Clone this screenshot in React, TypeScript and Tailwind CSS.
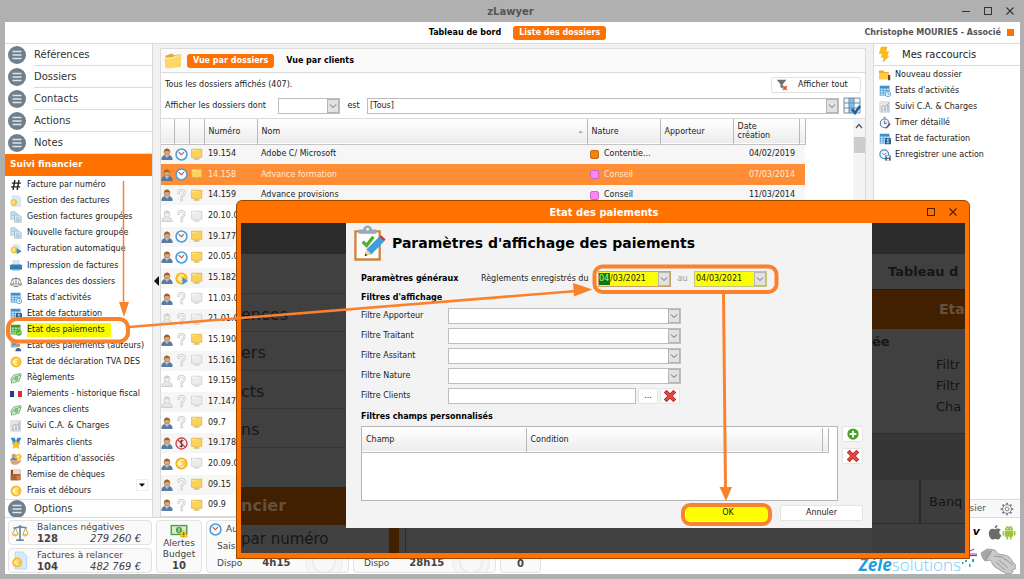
import type { ReactNode } from "react";

/* ---------- icons ---------- */

type IconName =
  | "hash" | "euroDoc" | "copy" | "auto" | "printer" | "balance" | "activity" | "billing"
  | "payment" | "authors" | "coin" | "cash" | "flag" | "chart" | "medal" | "partners"
  | "cheque" | "newFolder" | "timer" | "action";

function Euro({ x, y, r }: { x: number; y: number; r: number }) {
  return (
    <g>
      <circle cx={x} cy={y} r={r} fill="#f4b21b" />
      <circle cx={x} cy={y} r={r * 0.78} fill="#fbc93d" />
      <path
        d={`M${x + r * 0.4} ${y - r * 0.4}a${r * 0.52} ${r * 0.52} 0 1 0 0 ${r * 0.8}M${x - r * 0.65} ${y - r * 0.12}h${r * 0.8}M${x - r * 0.65} ${y + r * 0.15}h${r * 0.8}`}
        fill="none"
        stroke="#fff3c4"
        strokeWidth={r * 0.2}
      />
    </g>
  );
}

function Sheet({ green }: { green?: boolean }) {
  const main = green ? "#3f9a2e" : "#3f8fca";
  const cell = green ? "#a9dd8c" : "#bfe0f5";
  return (
    <g>
      <rect x="1" y="1" width="13" height="13" fill={main} />
      {[0, 1, 2].map((r) =>
        [0, 1, 2].map((c) => (
          <rect key={`${r}${c}`} x={2 + c * 4} y={4.6 + r * 3.1} width="3.2" height="2.4" fill={cell} />
        )),
      )}
    </g>
  );
}

function Icon({ name }: { name: IconName }) {
  return (
    <svg viewBox="0 0 16 16" className="size-3 shrink-0" aria-hidden="true">
      {name === "hash" && (
        <path d="M6.5 1.5 4 14.5M12 1.5 9.5 14.5M2.5 5.5h12M1.5 10.5h12" stroke="#222" strokeWidth="1.9" fill="none" />
      )}
      {name === "euroDoc" && (
        <g>
          <path d="M3 1h8l3 3v11H3z" fill="#d7ebf8" stroke="#b4d3e8" strokeWidth=".6" />
          <Euro x={5} y={10} r={4.2} />
        </g>
      )}
      {name === "copy" && (
        <g fill="#d4e3ee" stroke="#8fb1c8" strokeWidth=".9">
          <path d="M1 1h6l2 2v8H1z" />
          <path d="M6 5h6l3 3v7H6z" />
          <path d="M8 9h4M8 11h5M8 13h5M3 4h3M3 6h2" />
        </g>
      )}
      {name === "auto" && (
        <g>
          <path d="M4 1h7l3 3v9H4z" fill="#d7ebf8" />
          <Euro x={5.5} y={9} r={4.5} />
          <path d="m9 7 6.5 4L9 15z" fill="#2690d2" />
        </g>
      )}
      {name === "printer" && (
        <g>
          <path d="M4 1h8v6H4z" fill="#d9ebf7" stroke="#8cb8d6" strokeWidth=".6" />
          <rect y="6" width="16" height="7" rx="1.5" fill="#2f80b9" />
          <path d="M3 10h10v4H3z" fill="#5fb2e0" />
          <path d="M3 10h10v1.4H3z" fill="#174f7b" />
        </g>
      )}
      {name === "balance" && (
        <g fill="none" stroke="#8f8660" strokeWidth="1">
          <path d="M8 1.5V13M5 14h6M2.5 4.5 8 3l5.5 1.5" stroke="#7088a0" strokeWidth="1.4" />
          <path d="m3 4.5-2.5 6M3 4.5l2.5 6M13 4.5l-2.5 6M13 4.5l2.5 6" />
          <path d="M.5 10.5h5a2.5 2 0 0 1-5 0zM10.5 10.5h5a2.5 2 0 0 1-5 0z" fill="#dcc883" />
        </g>
      )}
      {name === "activity" && (
        <g>
          <Sheet />
          <circle cx="12" cy="12" r="3.6" fill="#e8f5fd" stroke="#4b9ad2" />
          <path d="M12 10v2.2h1.6" fill="none" stroke="#35678c" strokeWidth=".8" />
        </g>
      )}
      {name === "billing" && (
        <g>
          <Sheet />
          <path d="M8 7h8v8H8z" fill="#245f8e" />
          <path d="M13.5 9h-3l2 2-2 2h3" fill="none" stroke="#fff" />
        </g>
      )}
      {name === "payment" && (
        <g>
          <Sheet green />
          <circle cx="11.8" cy="11.8" r="3.8" fill="#55b42f" />
          <path d="m10 12 1.4 1.4 2.4-3" fill="none" stroke="#fff" />
        </g>
      )}
      {name === "authors" && (
        <g>
          <path d="M1 2h9v8H1z" fill="#9dbbd2" />
          <path d="M3 4h5M3 6h5M3 8h3" stroke="#5c7c95" />
          <circle cx="11" cy="7" r="2.4" fill="#c98c54" />
          <path d="M7 15c0-6 8-6 8 0z" fill="#3f5f85" />
        </g>
      )}
      {name === "coin" && <Euro x={8} y={8} r={7.2} />}
      {name === "cash" && (
        <g fill="#cfe8cd" stroke="#5fa45f" strokeWidth="1">
          <path d="M1 9 5 4l9-2-2 7-10 3z" />
          <path d="m2 12 4-5 9-3-3 8-10 3z" />
          <circle cx="8.5" cy="9" r="2" fill="#8bc58a" />
        </g>
      )}
      {name === "flag" && (
        <g>
          <path d="M0 4h5.3v8H0z" fill="#24398f" />
          <path d="M5.3 4h5.4v8H5.3z" fill="#f5f5f5" />
          <path d="M10.7 4H16v8h-5.3z" fill="#dc2c3a" />
        </g>
      )}
      {name === "chart" && (
        <g>
          <path d="M1 1h13v14H1z" fill="#e7e7e7" stroke="#c2c2c2" strokeWidth=".7" />
          <path d="M3 10h2v4H3zM7 8h2v6H7zM11 5h2v9h-2z" fill="#a9bccb" />
          <path d="m2 9 4-3 3 1 5-5" fill="none" stroke="#cf8a75" />
        </g>
      )}
      {name === "medal" && (
        <g>
          <path d="M1 1h5l3 6-4 3zM15 1h-5L7 7l4 3z" fill="#2d8bd0" />
          <path d="m8 4 1.900 3.700 4.100.5-3 2.900.8 4.100L8 13.300l-3.800 1.900.8-4.100-3-2.900 4.100-.5z" fill="#ffc021" stroke="#dd981a" strokeWidth=".5" />
        </g>
      )}
      {name === "partners" && (
        <g>
          <circle cx="5" cy="4" r="3" fill="#d19a66" />
          <path d="M0 10c0-5 10-5 10 0z" fill="#4d8bbd" />
          <Euro x={11.5} y={5} r={3.8} />
          <path d="M1 10c5-1 6 2 14-1-1 7-11 9-14 4z" fill="#e0a36d" />
        </g>
      )}
      {name === "cheque" && (
        <g>
          <path d="M1 1h13v14H1z" fill="#8a4a26" />
          <path d="M4 1h10v6H4z" fill="#e9dccb" />
          <path d="M1 7h10v8H1z" fill="#a9643a" />
          <circle cx="11.500" cy="11.500" r="3" fill="#d9803f" />
        </g>
      )}
      {name === "newFolder" && (
        <g>
          <path d="M0 2h6l1 2h6v9H0z" fill="#e6aa28" />
          <path d="M0 5h13v9H0z" fill="#ffc94a" />
          <path d="M12 8h3v7h-3z" fill="#5b4a36" />
        </g>
      )}
      {name === "timer" && (
        <g>
          <circle cx="7.500" cy="8.500" r="5.800" fill="#eef6fc" stroke="#6381a0" strokeWidth="1.500" />
          <path d="M6 1h3M7.500 5v4l3-1" fill="none" stroke="#44607c" strokeWidth="1.200" />
          <path d="m9 14 5-6 1.500 1.500-5 5.500-2 .5z" fill="#7b3e68" />
        </g>
      )}
      {name === "action" && (
        <g>
          <circle cx="7" cy="7" r="5.800" fill="#eaf5fd" stroke="#3b8fce" strokeWidth="1.600" />
          <path d="m4 5 3 3 3-3" fill="none" stroke="#d4574a" strokeWidth="1.200" />
          <path d="M8.500 8.500H15.500v7h-7z" fill="#3e4e62" />
          <path d="M10 8.500h4v3h-4zM10.500 13h3v2.500h-3z" fill="#eef2f5" />
        </g>
      )}
    </svg>
  );
}

function Person({ on }: { on: boolean }) {
  return (
    <svg viewBox="0 0 16 16" className="size-3" aria-hidden="true">
      <path d="M1 15.500c0-5 3-6 7-6s7 1 7 6z" fill={on ? "#4f7da9" : "#e4e4e4"} stroke={on ? "#3f678f" : "#bcbcbc"} strokeWidth=".8" />
      <path d="m5.500 9.500 2.500 4 2.500-4z" fill="#fff" />
      <path d="m7.300 10.500.7 5 .9-5z" fill={on ? "#cb4a34" : "#d0d0d0"} />
      <circle cx="8" cy="5.500" r="3.900" fill={on ? "#dba878" : "#efefef"} stroke={on ? "#a8703c" : "#bcbcbc"} strokeWidth=".8" />
      <path d="M4 5c0-6 8-6 8 0-2-1.500-5-1.500-8 0z" fill={on ? "#a4622b" : "#cfcfcf"} />
    </svg>
  );
}

function Clock() {
  return (
    <svg viewBox="0 0 16 16" className="size-[13px]" aria-hidden="true">
      <circle cx="8" cy="8" r="6.700" fill="#f4fafe" stroke="#4c9cd8" strokeWidth="1.900" />
      <path d="m4.500 5.200 3.500 3 3-3.200" fill="none" stroke="#d2554c" strokeWidth="1.300" />
    </svg>
  );
}

type Status = "clock" | "ask" | "play" | "coin" | "none";

function StatusIcon({ status }: { status: Status }) {
  if (status === "clock") return <Clock />;
  return (
    <svg viewBox="0 0 16 16" className="size-[13px]" aria-hidden="true">
      {status === "ask" && (
        <g fill="none" strokeLinecap="round">
          <path d="M4.500 5c0-4.500 7-4.500 7 0 0 2.500-3.300 2.500-3.300 5M8.200 13.500v.2" stroke="#c4c4c4" strokeWidth="3.200" />
          <path d="M4.500 5c0-4.500 7-4.500 7 0 0 2.500-3.300 2.500-3.300 5M8.200 13.500v.2" stroke="#f6f6f6" strokeWidth="1.500" />
        </g>
      )}
      {(status === "play" || status === "coin") && <Euro x={8} y={8} r={7.500} />}
      {status === "play" && <path d="m9 6.500 7 4.500-7 4.500z" fill="#3b9bd6" />}
      {status === "none" && (
        <g fill="none">
          <circle cx="8" cy="8" r="6.800" fill="#fbeeee" stroke="#cb3c3c" strokeWidth="1.600" />
          <path d="M10.500 5C7 3 5 7 8 8s2 5-2.500 3M8 3v10" stroke="#444" strokeWidth="1.300" />
          <path d="m3.200 3.200 9.600 9.600" stroke="#cb3c3c" strokeWidth="1.600" />
        </g>
      )}
    </svg>
  );
}

function FolderMark({ on }: { on: boolean }) {
  return (
    <svg viewBox="0 0 16 16" className="size-[13px]" aria-hidden="true">
      <path d="M2 1.500h12.500v10h-5l-1.500 3-1-3H2z" fill={on ? "#fbd35c" : "#ececec"} stroke={on ? "#dcae3a" : "#c9c9c9"} strokeWidth=".9" />
      <path d="M2.500 2h5l-1 2h-4z" fill={on ? "#fde596" : "#fafafa"} />
      <path d="M4 13.500h8" stroke={on ? "#c3a14b" : "#c9c9c9"} />
    </svg>
  );
}

function Cross() {
  return (
    <svg viewBox="0 0 16 16" className="size-3.5" aria-hidden="true">
      <path d="m2.500 2.500 11 11M13.500 2.500l-11 11" stroke="#b52c25" strokeWidth="4.600" />
      <path d="m3 3 10 10M13 3 3 13" stroke="#e04a3f" strokeWidth="3" />
    </svg>
  );
}

/* ---------- data ---------- */

const sections = ["Références", "Dossiers", "Contacts", "Actions", "Notes"];

const financeLinks: [string, IconName][] = [
  ["Facture par numéro", "hash"],
  ["Gestion des factures", "euroDoc"],
  ["Gestion factures groupées", "copy"],
  ["Nouvelle facture groupée", "copy"],
  ["Facturation automatique", "auto"],
  ["Impression de factures", "printer"],
  ["Balances des dossiers", "balance"],
  ["Etats d'activités", "activity"],
  ["Etat de facturation", "billing"],
  ["Etat des paiements", "payment"],
  ["Etat des paiements (auteurs)", "authors"],
  ["Etat de déclaration TVA DES", "coin"],
  ["Règlements", "cash"],
  ["Paiements - historique fiscal", "flag"],
  ["Avances clients", "cash"],
  ["Suivi C.A. & Charges", "chart"],
  ["Palmarès clients", "medal"],
  ["Répartition d'associés", "partners"],
  ["Remise de chèques", "cheque"],
  ["Frais et débours", "coin"],
];

const shortcuts: [string, IconName][] = [
  ["Nouveau dossier", "newFolder"],
  ["Etats d'activités", "activity"],
  ["Suivi C.A. & Charges", "chart"],
  ["Timer détaillé", "timer"],
  ["Etat de facturation", "billing"],
  ["Enregistrer une action", "action"],
];

interface Row {
  num: string;
  person: boolean;
  status: Status;
  folder: boolean;
  name?: string;
  nature?: string;
  color?: "orange" | "pink";
  date?: string;
}

const rows: Row[] = [
  { num: "19.154", person: true, status: "clock", folder: true, name: "Adobe C/ Microsoft", nature: "Contentie...", color: "orange", date: "04/02/2019" },
  { num: "14.158", person: true, status: "clock", folder: true, name: "Advance formation", nature: "Conseil", color: "pink", date: "07/03/2014" },
  { num: "14.159", person: true, status: "ask", folder: true, name: "Advance provisions", nature: "Conseil", color: "pink", date: "11/03/2014" },
  { num: "20.10.0", person: false, status: "ask", folder: false },
  { num: "19.177", person: true, status: "clock", folder: true },
  { num: "20.05.0", person: true, status: "clock", folder: true },
  { num: "15.182", person: true, status: "play", folder: true },
  { num: "11.03.0", person: true, status: "ask", folder: false },
  { num: "21.01.0", person: false, status: "ask", folder: false },
  { num: "15.190", person: true, status: "ask", folder: true },
  { num: "15.161", person: true, status: "ask", folder: false },
  { num: "19.159", person: false, status: "ask", folder: false },
  { num: "17.147", person: false, status: "ask", folder: false },
  { num: "09.7", person: true, status: "ask", folder: true },
  { num: "19.178", person: true, status: "none", folder: true },
  { num: "20.09.0", person: true, status: "coin", folder: false },
  { num: "09.15", person: true, status: "ask", folder: true },
  { num: "09.9", person: true, status: "ask", folder: true },
];

/* ---------- building blocks ---------- */

function Arrow() {
  return (
    <span className="pointer-events-none flex w-3 shrink-0 items-center justify-center border border-[#b5b5b5] bg-[#e2e2e2]">
      <svg viewBox="0 0 8 8" className="size-2" aria-hidden="true">
        <path d="m1 2.500 3 3 3-3" fill="none" stroke="#666" />
      </svg>
    </span>
  );
}

function Combo({ label, value = "", className }: { label: string; value?: string; className: string }) {
  return (
    <span className={`flex border border-[#bdbdbd] bg-white ${className}`}>
      <select aria-label={label} className="min-w-0 flex-1 appearance-none bg-transparent px-0.5 outline-none">
        <option>{value}</option>
      </select>
      <Arrow />
    </span>
  );
}

function MenuDisc() {
  return (
    <span className="flex size-[18px] shrink-0 items-center justify-center rounded-full bg-[#6f7f8c]">
      <svg viewBox="0 0 10 10" className="size-2.5" aria-hidden="true">
        <path d="M.5 1.500h9M.5 5h9M.5 8.500h9" stroke="#dfe5ea" strokeWidth="1.300" />
      </svg>
    </span>
  );
}

function SectionButton({ children }: { children: ReactNode }) {
  return (
    <button className="flex h-[22px] w-full shrink-0 items-center gap-2 pl-[3px] text-left text-[10px] text-[#333]">
      <MenuDisc />
      <span className="flex h-full flex-1 items-center border-b border-[#dcdcdc]">{children}</span>
    </button>
  );
}

function Sidebar() {
  return (
    <nav className="flex w-[147px] shrink-0 flex-col bg-white">
      {sections.map((s) => (
        <SectionButton key={s}>{s}</SectionButton>
      ))}
      <button className="h-[22px] shrink-0 bg-[#ff7200] pl-[5px] text-left text-[9px] font-bold text-white">
        Suivi financier
      </button>
      <div className="relative flex min-h-0 flex-1 flex-col pt-px">
        {financeLinks.map(([label, icon]) => (
          <a key={label} href="#" className="flex min-h-0 flex-1 items-center gap-[5px] whitespace-nowrap pl-[5px] text-[#222]">
            <Icon name={icon} />
            <span className={label === "Etat des paiements" ? "bg-[#f7fb00] pr-1.5 leading-[14px]" : "leading-3"}>{label}</span>
          </a>
        ))}
        <button aria-label="Défiler" className="absolute right-1 bottom-2 flex size-3 items-center justify-center border border-[#eee] bg-white">
          <svg viewBox="0 0 8 8" className="size-2" aria-hidden="true">
            <path d="M1 2.500h6L4 5.800z" fill="#000" />
          </svg>
        </button>
      </div>
      <button className="flex h-[18px] w-full shrink-0 items-center gap-2 border-t border-[#dcdcdc] pl-[3px] text-left text-[10px] text-[#333]">
        <MenuDisc />
        Options
      </button>
    </nav>
  );
}

const headCell = "border-r border-[#b8b8b8] px-1 py-0 text-left font-normal";

function DossierTable() {
  return (
    <table className="w-[644px] table-fixed border-collapse text-[#222]">
      <colgroup>
        <col className="w-[13px]" />
        <col className="w-[15px]" />
        <col className="w-[15px]" />
        <col className="w-[53px]" />
        <col className="w-[330px]" />
        <col className="w-[73px]" />
        <col className="w-[73px]" />
        <col className="w-[66px]" />
        <col className="w-[6px]" />
      </colgroup>
      <thead>
        <tr className="h-[25px] border-b border-[#c4c4c4] bg-linear-to-b from-white to-[#ececec] leading-[9px]">
          <th className="border-r border-[#b8b8b8]" />
          <th className="border-r border-[#b8b8b8]" />
          <th className="border-r border-[#b8b8b8]" />
          <th className={headCell}>Numéro</th>
          <th className={headCell}>
            <span className="flex items-center justify-between">
              Nom
              <svg viewBox="0 0 6 4" className="h-[3px] w-[5px]" aria-hidden="true">
                <path d="m0 4 3-3.500L6 4z" fill="#aaa" />
              </svg>
            </span>
          </th>
          <th className={headCell}>Nature</th>
          <th className={headCell}>Apporteur</th>
          <th className={headCell}>
            Date
            <br />
            création
          </th>
          <th className="border-r border-[#b8b8b8]" />
        </tr>
      </thead>
      <tbody>
        {rows.map((r) => (
          <tr
            key={r.num}
            className={
              r.num === "14.158"
                ? "h-[21px] bg-[#ff8d35] text-[#ffe9d6]"
                : "odd:h-5 odd:bg-[#f6f6f6] even:h-[21px] even:bg-white"
            }
          >
            <td className="p-0"><Person on={r.person} /></td>
            <td className="p-0 pl-px"><StatusIcon status={r.status} /></td>
            <td className="p-0 pl-px"><FolderMark on={r.folder} /></td>
            <td className="py-0 pr-0 pl-1 whitespace-nowrap">{r.num}</td>
            <td className="py-0 pr-0 pl-1">{r.name}</td>
            <td className="py-0 pr-0 pl-[3px]">
              {r.nature && (
                <span className="flex items-center gap-[5px] whitespace-nowrap">
                  <span className={r.color === "orange" ? "size-[9px] rounded-xs border border-[#c26a14] bg-[#f5820d]" : "size-[9px] rounded-xs border border-[#c46cc9] bg-[#ff84f6]"} />
                  {r.nature}
                </span>
              )}
            </td>
            <td />
            <td className="p-0 text-right" colSpan={2}>
              <span className="pr-2.5">{r.date}</span>
            </td>
          </tr>
        ))}
      </tbody>
    </table>
  );
}

function DossierPanel() {
  return (
    <main className="mt-1 flex min-w-0 flex-1 flex-col border border-[#dadada] bg-white">
      <div className="flex h-6 shrink-0 items-center border-b border-[#dadada] bg-[#fafafa] pl-0.5">
        <svg viewBox="0 0 20 18" className="h-[17px] w-5" aria-hidden="true">
          <path d="M2 4 9 1.500l2 2 7-1V15L3 17z" fill="#dcaa35" />
          <path d="m1 6 9-.5 2-1.500 7-.5-1 12.500-16 1.500z" fill="#fbd766" />
          <path d="m1 6 9-.5 2-1.500 7-.5v1l-6 .6-2 1.400-9.800 1z" fill="#fdeaa6" />
        </svg>
        <button className="ml-1 rounded-[3px] bg-[#ff7200] px-1.5 leading-[14px] font-bold text-white">Vue par dossiers</button>
        <button className="ml-3 font-bold text-black">Vue par clients</button>
      </div>
      <div className="flex h-6 shrink-0 items-center justify-between pr-1 pl-1">
        <span>Tous les dossiers affichés (407).</span>
        <button className="flex h-4 w-[90px] items-center gap-2.5 rounded-xs border border-[#e2e2e2] bg-white pl-1">
          <svg viewBox="0 0 16 16" className="size-3" aria-hidden="true">
            <path d="M1 1h13l-5 6v6l-3-2V7z" fill="#6a6f74" />
            <path d="m9.500 9.500 5 5M14.500 9.500l-5 5" stroke="#e2512c" strokeWidth="2" />
          </svg>
          Afficher tout
        </button>
      </div>
      <div className="flex h-[21px] shrink-0 items-center pr-1 pb-1 pl-1">
        <span className="w-[113px] whitespace-nowrap">Afficher les dossiers dont</span>
        <Combo label="Critère" className="h-4 w-[62px]" />
        <span className="w-[27px] text-center">est</span>
        <Combo label="Valeur" value="[Tous]" className="h-4 flex-1" />
        <svg viewBox="0 0 18 18" className="ml-1 size-[18px]" aria-hidden="true">
          <path d="M1 1h16v15H1z" fill="#f4f9fd" />
          <path d="M6 1h5v15H6z" fill="#7cc0ee" />
          <path d="M1 1h16v15H1zM6 1v15M11 1v15M1 6h16M1 11h16" fill="none" stroke="#6c8ca6" />
          <path d="m9 12 3 4 5-7" fill="none" stroke="#245f95" strokeWidth="2.600" />
        </svg>
      </div>
      <div className="flex min-h-0 flex-1 justify-between overflow-hidden border-t border-[#dadada]">
        <DossierTable />
        <div className="flex w-3 shrink-0 flex-col items-center bg-[#f4f4f4] pt-1">
          <svg viewBox="0 0 8 6" className="h-1.5 w-2" aria-hidden="true">
            <path d="m1 5 3-3.500L7 5" fill="none" stroke="#555" strokeWidth="1.200" />
          </svg>
          <div className="mt-2 h-4 w-[11px] bg-[#cdcdcd]" />
        </div>
      </div>
    </main>
  );
}

function Shortcuts() {
  return (
    <aside className="flex w-[147px] shrink-0 flex-col border-l border-[#dadada] bg-white">
      <h2 className="flex h-[22px] items-center gap-3 border-b border-[#dadada] pl-1 text-[10px]">
        <svg viewBox="0 0 12 18" className="h-[17px] w-3" aria-hidden="true">
          <path d="M3 1h6L8 6h3L9 11h2l-6 6 1-5H3l1.500-4H1z" fill="#fbbd12" stroke="#eaa40b" strokeWidth=".5" />
        </svg>
        Mes raccourcis
      </h2>
      <ul className="pt-px">
        {shortcuts.map(([label, icon]) => (
          <li key={label}>
            <a href="#" className="flex h-4 items-center gap-1 pl-[5px] whitespace-nowrap text-[#222]">
              <Icon name={icon} />
              {label}
            </a>
          </li>
        ))}
      </ul>
      <div className="mt-auto flex h-[18px] items-center justify-end gap-3.5 border-t border-[#dadada] bg-[#f8f8f8] pr-1.5 text-[9px] text-[#555]">
        Dossier
        <svg viewBox="0 0 16 16" className="size-[14px]" aria-hidden="true" fill="none" stroke="#777">
          <circle cx="8" cy="8" r="5" />
          <circle cx="8" cy="8" r="2.200" />
          <path strokeWidth="2" d="M8 .8v2M8 13.200v2M.8 8h2M13.200 8h2M2.900 2.900l1.400 1.400M11.700 11.700l1.400 1.400M13.100 2.900l-1.400 1.400M4.300 11.700l-1.400 1.400" />
        </svg>
      </div>
    </aside>
  );
}

const card = "rounded-[4px] border border-[#e3e3e3] bg-[#fafafa] text-[#444]";

function TotalCard({ icon, label, count, amount }: { icon: ReactNode; label: string; count: string; amount: string }) {
  return (
    <div className={`flex h-[25px] w-[144px] items-center pr-2.5 ${card}`}>
      <span className="flex w-7 shrink-0 items-center pl-0.5">{icon}</span>
      <div className="min-w-0 flex-1">
        <div className="leading-[11px] whitespace-nowrap">{label}</div>
        <div className="flex justify-between text-[10px] leading-[11px]">
          <b>{count}</b>
          <i>{amount}</i>
        </div>
      </div>
    </div>
  );
}

function GaugeCard({ title, value }: { title: string; value: string }) {
  return (
    <div className={`relative flex w-[143px] flex-col justify-between overflow-hidden px-2.5 pt-0.5 pb-0.5 ${card}`}>
      <svg viewBox="0 0 40 40" className="absolute right-1 bottom-[-10px] size-10" aria-hidden="true">
        <circle cx="20" cy="20" r="18" fill="#f6f6f6" stroke="#efefef" strokeWidth="2" />
        <circle cx="20" cy="20" r="11" fill="#f8f8f8" stroke="#ececec" strokeWidth="2" />
      </svg>
      <div className="-ml-2 flex items-center gap-1">
        <Clock />
        {title}
      </div>
      <div>Saisi</div>
      <div className="flex items-center gap-5">
        <span>Dispo</span>
        <b className="text-[10px] leading-3">{value}</b>
      </div>
    </div>
  );
}

function BottomBar() {
  return (
    <footer className="flex h-[57px] shrink-0 gap-1 border-t border-[#dadada] bg-white pt-0.5 pl-[3px] text-[9px]">
      <div className="flex flex-col gap-[3px]">
        <TotalCard
          label="Balances négatives"
          count="128"
          amount="279 260 €"
          icon={
            <svg viewBox="0 0 18 20" className="h-[19px] w-[18px]" aria-hidden="true" fill="none">
              <path d="M9 2v15M5 18h8M2 5.500 9 4l7 1" stroke="#6889ad" strokeWidth="1.800" />
              <path d="m4 5-3 7M4 5l3 7M15 5l-3 7M15 5l2.500 7" stroke="#a48b4d" strokeWidth=".8" />
              <path d="M.5 11.500h7c-.5 3.500-6.500 3.500-7 0zM11 11.500h6.500c-.5 3.500-6 3.500-6.500 0z" fill="#e9be55" />
            </svg>
          }
        />
        <TotalCard
          label="Factures à relancer"
          count="104"
          amount="482 769 €"
          icon={
            <svg viewBox="0 0 18 20" className="h-[19px] w-[18px]" aria-hidden="true">
              <path d="M4 1h8l4 4v14H4z" fill="#d5eaf8" stroke="#a9cde6" strokeWidth=".7" />
              <Euro x={6} y={12} r={5.200} />
            </svg>
          }
        />
      </div>
      <div className={`flex h-[53px] w-[46px] flex-col items-center ${card}`}>
        <svg viewBox="0 0 20 16" className="mt-0.5 h-[15px] w-5" aria-hidden="true">
          <path d="M1 2h18v11H1z" fill="#4f9e43" />
          <path d="M2.500 3.500h15v8h-15z" fill="#d5efc8" />
          <circle cx="10" cy="7.500" r="3.300" fill="#4f9e43" />
          <path d="M10 5.500v4" stroke="#fff" />
          <path d="m15 7 4.500 8.500h-9z" fill="#fbc01b" />
          <path d="M15 10v3M15 14v.8" stroke="#5a4000" />
        </svg>
        <span className="leading-[11px]">Alertes</span>
        <span className="leading-[11px]">Budget</span>
        <b className="text-[10px] leading-3">10</b>
      </div>
      <div className="flex h-[53px] gap-1">
        <GaugeCard title="Aujourd'hui" value="4h15" />
        <GaugeCard title="Semaine" value="28h15" />
        <div className={`flex w-[41px] items-end justify-center pb-0.5 ${card}`}>
          <b className="text-[10px] leading-3">0</b>
        </div>
      </div>
      <div className="flex flex-1 items-end justify-end pr-1">
        <div className="font-['Open_Sans',sans-serif] text-[17px] leading-[18px] whitespace-nowrap text-[#79cdf3]">
          <b className="font-bold text-[#1e9fe0] italic">Zèle</b>
          <span className="font-light">solutions</span>
        </div>
        <div className="flex h-full w-[55px] flex-col justify-between pt-1">
          <div className="flex h-4 items-center justify-end">
            <b className="mr-2 text-[11px] text-black italic">v</b>
            <svg viewBox="0 0 16 18" className="h-[15px] w-3.5" aria-hidden="true">
              <path d="M11 0c.3 2-1.500 4-3.300 4C7.400 2 9.200.2 11 0zM8 5c1 0 2-1 4-.8 1.300.1 2.300.6 3 1.600-2.800 1.700-2.300 5.500.6 6.600C14.800 15 13.200 17.500 11.500 17.500c-1.300 0-1.700-.8-3.200-.8s-2 .8-3.200.8C3 17.400.5 13.400.5 10c0-3.600 2.300-5.600 4.500-5.600C6.300 4.400 7.200 5 8 5z" fill="#6b6b6b" />
            </svg>
            <svg viewBox="0 0 16 18" className="h-[15px] w-3.5" aria-hidden="true">
              <path d="M3 6.500a5 4.800 0 0 1 10 0zM3 7.300h10V14H3zM.3 7.500h2v5h-2zM13.700 7.500h2v5h-2zM5 14h2v3.500H5zM9 14h2v3.500H9z" fill="#9ac43c" />
              <path d="m4.500.8 1.300 2M11.500.8l-1.300 2" stroke="#9ac43c" />
              <path d="M5.600 4.200h1M9.400 4.200h1" stroke="#fff" />
            </svg>
          </div>
          <div className="flex justify-between">
            <svg viewBox="0 0 18 26" className="h-[26px] w-[18px]" aria-hidden="true">
              <path d="m9 3 4-2M9 6h7" stroke="#c2408c" strokeWidth="1.200" />
              <path d="M9 7.500h7" stroke="#3b56b4" strokeWidth="1.200" />
              <path d="M4 12h2v2H4zM8 16h1.500v3H8zM11 11h2v3h-2z" fill="#27a9a3" />
              <path d="M1 14h1.500v2H1z" fill="#1e9fe0" />
            </svg>
            <svg viewBox="0 0 36 26" className="h-[26px] w-9" aria-hidden="true">
              <path d="M1 5 7 1l8 1 3 4 6 1c6 1 8 5 9 8 3 1 4 4 2 6l-3 1 1 2c-2 2-5 2-8 1l-10-6c-3-2-3-6-5-7l-5 1z" fill="#cacaca" stroke="#8d8d8d" strokeWidth=".8" />
              <path d="M1 5 7 1l5 2-2 5-5 5C2 11 1 8 1 5z" fill="#a8a8a8" />
              <path d="M12 3c-3 1-5 4-6 9M14 8l8 1 4 3M19 12l9 8M16 14l9 8M25 11l8 6" fill="none" stroke="#8d8d8d" strokeWidth=".8" />
            </svg>
          </div>
        </div>
      </div>
    </footer>
  );
}

/* ---------- dialog ---------- */

function BackdropLeft() {
  return (
    <div aria-hidden="true" className="flex w-[105px] shrink-0 flex-col overflow-hidden bg-[#404040] text-[16px] text-[#171717]">
      <div className="h-[31px] shrink-0 bg-[#2b2b2b]" />
      <div className="h-10 shrink-0 border-b border-[#353535]" />
      <div className="flex h-[38px] shrink-0 items-center border-b border-[#353535] pt-1">ences</div>
      <div className="flex h-[39px] shrink-0 items-center border-b border-[#353535] pt-1">ers</div>
      <div className="flex h-[38px] shrink-0 items-center border-b border-[#353535] pt-1">cts</div>
      <div className="flex h-[39px] shrink-0 items-center border-b border-[#353535] pt-1">ns</div>
      <div className="h-[39px] shrink-0" />
      <div className="flex h-[38px] shrink-0 items-center bg-[#402000] font-bold text-[#65503f]">ncier</div>
      <div className="flex min-h-0 flex-1 items-center text-[15px] whitespace-nowrap">par numéro</div>
    </div>
  );
}

function BackdropRight() {
  return (
    <div aria-hidden="true" className="flex w-[93px] shrink-0 flex-col overflow-hidden bg-[#404040] text-[13px] whitespace-nowrap text-[#151515]">
      <div className="h-[31px] shrink-0 bg-[#2b2b2b]" />
      <div className="flex h-9 shrink-0 items-center border-b border-[#1d1d1d] pl-4 font-bold">Tableau d</div>
      <div className="flex h-[39px] shrink-0 items-center bg-[#402000] pl-[67px] text-[14px] font-bold text-[#65503f]">Eta</div>
      <div className="h-[25px] shrink-0 leading-[25px] font-bold">ée</div>
      <div className="flex h-[66px] shrink-0 flex-col pl-16 leading-[21px]">
        <span>Filtr</span>
        <span>Filtr</span>
        <span>Cha</span>
      </div>
      <div className="h-[14px] shrink-0 border-b border-[#2e2e2e]" />
      <div className="h-[46px] shrink-0 bg-[#363636]" />
      <div className="flex h-[43px] shrink-0 items-center bg-[#3d3d3d]">
        <span className="h-full w-[49px] shrink-0 border-r-2 border-[#2b2b2b]" />
        <span className="pl-2">Banq</span>
      </div>
      <div className="flex-1 border-t border-[#2e2e2e] bg-[#3e3e3e]" />
    </div>
  );
}

const smallButton = "flex items-center justify-center rounded-xs border border-[#e4e4e4] bg-white";

function FilterRow({ label }: { label: string }) {
  return (
    <div className="flex h-5 items-center">
      <span className="w-[87px]">{label}</span>
      <Combo label={label} className="h-4 w-[233px]" />
    </div>
  );
}

function PaymentsDialog() {
  return (
    <section
      role="dialog"
      aria-labelledby="dialog-title"
      className="absolute top-[200px] left-[236px] flex h-[359px] w-[734px] flex-col rounded-t-md border border-[#9a4700] bg-[#ff7200] px-1 pb-[5px]"
    >
      <header className="flex h-[22px] shrink-0 items-center pr-2 text-[10px]">
        <span className="w-10" />
        <h2 id="dialog-title" className="flex-1 text-center font-bold text-white">Etat des paiements</h2>
        <button aria-label="Agrandir" className="mr-3.5 size-2 border border-[#4a2000]" />
        <button aria-label="Fermer">
          <svg viewBox="0 0 8 8" className="size-2" aria-hidden="true">
            <path d="m.5.5 7 7M7.500.5l-7 7" stroke="#4a2000" strokeWidth="1.100" />
          </svg>
        </button>
      </header>
      <div className="flex min-h-0 flex-1">
        <BackdropLeft />
        <div className="flex min-w-0 flex-1 flex-col">
          <form className="flex min-h-0 flex-1 flex-col bg-[#f3f3f3] px-[15px] text-[#222]">
            <div className="-ml-2 flex h-10 shrink-0 items-center gap-1.5">
              <svg viewBox="0 0 34 38" className="h-[37px] w-[33px]" aria-hidden="true">
                <path d="M2.500 6.500h25v29h-25z" fill="#fdfdfd" stroke="#cf8540" strokeWidth="2.400" />
                <path d="M6 9V4.500h4.500a4.500 4 0 0 1 9 0H24V9z" fill="#9aa7b4" />
                <circle cx="15" cy="4.200" r="1.500" fill="#eef1f4" />
                <path d="m10 17 4 4 7-9" fill="none" stroke="#4fb02a" strokeWidth="3.400" />
                <path d="m12 32 2-7L27 12l5 5-13 13z" fill="#3d9fe0" />
                <path d="m27 12 2-1.500 4.500 4L32 17z" fill="#c83a3a" />
                <path d="m12 32 2-7 5 5z" fill="#efd2a5" />
                <path d="m12 32 .8-2.800 2 2z" fill="#333" />
              </svg>
              <h1 className="text-[14px] font-bold text-black">Paramètres d'affichage des paiements</h1>
            </div>
            <div className="mt-[7px] flex h-[18px] shrink-0 items-center">
              <b className="w-[120px] text-black">Paramètres généraux</b>
              <span className="w-[117px] whitespace-nowrap">Règlements enregistrés du</span>
              <span role="group" aria-label="Du" className="flex h-4 w-[73px] items-center border border-[#c9a26b] bg-[#fbff00]">
                <input aria-label="Jour" defaultValue="04" className="h-3 w-[11px] min-w-0 bg-[#0b7a12] text-[#c8f26a] outline-none" />
                <input aria-label="Mois et année" defaultValue="/03/2021" className="min-w-0 flex-1 bg-transparent outline-none" />
                <span className="flex h-full"><Arrow /></span>
              </span>
              <label htmlFor="date-end" className="w-[23px] text-center text-[#999]">au</label>
              <span className="flex h-4 w-[73px] border border-[#c6c67a] bg-[#fbff00]">
                <input id="date-end" defaultValue="04/03/2021" className="min-w-0 flex-1 bg-transparent pl-px outline-none" />
                <Arrow />
              </span>
            </div>
            <b className="mt-0.5 h-4 leading-4 text-black">Filtres d'affichage</b>
            <div className="flex flex-col">
              {["Filtre Apporteur", "Filtre Traitant", "Filtre Assitant", "Filtre Nature"].map((l) => (
                <FilterRow key={l} label={l} />
              ))}
              <div className="flex h-5 items-center">
                <label htmlFor="clients" className="w-[87px]">Filtre Clients</label>
                <input id="clients" className="h-4 w-[188px] border border-[#bdbdbd] bg-white" />
                <button type="button" className={`ml-0.5 h-4 w-5 ${smallButton}`}>...</button>
                <button type="button" aria-label="Effacer" className={`ml-0.5 h-4 w-5 ${smallButton}`}>
                  <Cross />
                </button>
              </div>
            </div>
            <b className="mt-0.5 h-[17px] leading-[17px] text-black">Filtres champs personnalisés</b>
            <div className="mt-px flex gap-1">
              <div className="h-[75px] flex-1 border border-[#b5b5b5] bg-white pt-px pr-2">
                <table className="w-full table-fixed border-collapse">
                  <thead>
                    <tr className="h-6 border-b border-[#bbb] bg-linear-to-b from-white to-[#ececec]">
                      <th className="w-[164px] border-r border-[#b8b8b8] px-1 text-left font-normal">Champ</th>
                      <th className="border-r border-[#b8b8b8] px-1 text-left font-normal">Condition</th>
                      <th className="w-1.5 border-r border-[#b8b8b8]" />
                    </tr>
                  </thead>
                </table>
              </div>
              <div className="-mr-1.5 flex w-[21px] flex-col gap-1.5">
                <button type="button" aria-label="Ajouter" className={`h-4 ${smallButton}`}>
                  <svg viewBox="0 0 16 16" className="size-3" aria-hidden="true">
                    <circle cx="8" cy="8" r="7.500" fill="#46a420" />
                    <path d="M8 3.500v9M3.500 8h9" stroke="#fff" strokeWidth="2.400" />
                  </svg>
                </button>
                <button type="button" aria-label="Supprimer" className={`h-4 ${smallButton}`}>
                  <Cross />
                </button>
              </div>
            </div>
            <div className="mt-1 -mr-1.5 flex h-4 justify-end gap-2.5">
              <button type="button" className="w-[84px] rounded-xs bg-[#fdff00]">OK</button>
              <button type="button" className={`w-[83px] ${smallButton}`}>Annuler</button>
            </div>
          </form>
          <div aria-hidden="true" className="flex h-[25px] shrink-0 bg-[#404040] pl-[43px]">
            <span className="w-2.5 bg-[#402000]" />
            <span className="w-[7px] border-r border-[#2c2c2c]" />
          </div>
        </div>
        <BackdropRight />
      </div>
    </section>
  );
}

function Callouts() {
  return (
    <svg viewBox="0 0 1024 579" className="pointer-events-none absolute top-0 left-0 h-[579px] w-[1024px]" aria-hidden="true">
      <g fill="none" stroke="#fa822d">
        <rect x="8" y="319" width="120" height="22.500" rx="9" strokeWidth="4" />
        <rect x="594.500" y="266.500" width="182" height="25.500" rx="8" strokeWidth="4" />
        <rect x="683" y="505" width="87" height="19" rx="7" strokeWidth="4" />
        <path d="M123.500 181v124" strokeWidth="1.500" />
        <path d="m129 327 448-36" strokeWidth="2.600" />
        <path d="m723.500 293 2 196" strokeWidth="3" />
      </g>
      <g fill="#fa822d">
        <path d="M119 302h10l-5 15z" />
        <path d="m573 283 19.500 6.500L574 296.500z" />
        <path d="M719.500 487h12.500l-6 14z" />
      </g>
    </svg>
  );
}

/* ---------- page ---------- */

export default function App() {
  return (
    <div className="relative flex h-screen flex-col overflow-hidden bg-[#b0b0b0] pr-1 pb-[5px] pl-[5px] font-['DejaVu_Sans',Verdana,sans-serif] text-[8px] text-[#222]">
      <header className="flex h-[22px] shrink-0 items-center pr-1.5 text-[10px] text-[#555]">
        <span className="w-[54px]" />
        <h1 className="flex-1 text-center font-bold">zLawyer</h1>
        <div className="flex items-center gap-3.5">
          <button aria-label="Réduire" className="h-2 w-2"><span className="block h-px bg-[#333]" /></button>
          <button aria-label="Agrandir" className="size-2 border border-[#333]" />
          <button aria-label="Fermer">
            <svg viewBox="0 0 8 8" className="size-2" aria-hidden="true">
              <path d="m.5.5 7 7M7.500.5l-7 7" stroke="#333" strokeWidth="1.100" />
            </svg>
          </button>
        </div>
      </header>
      <div className="flex h-[22px] shrink-0 items-center border-b border-[#dadada] bg-white pr-1.5 pl-4 font-bold">
        <span className="flex-1" />
        <a href="#" className="text-black">Tableau de bord</a>
        <a href="#" className="ml-3 rounded-[3px] bg-[#ff7200] px-1.5 leading-[14px] text-white">Liste des dossiers</a>
        <span className="flex flex-1 items-center justify-end gap-1.5 text-[#555]">
          Christophe MOURIES - Associé
          <span className="size-[7px] bg-[#ff7200]" />
        </span>
      </div>
      <div className="flex min-h-0 flex-1 bg-[#f1f1f1]">
        <Sidebar />
        <button aria-label="Replier le menu" className="flex w-2 shrink-0 items-center justify-center border-l border-[#dadada]">
          <svg viewBox="0 0 5 10" className="h-2.5 w-[5px]" aria-hidden="true">
            <path d="M5 0v10L0 5z" fill="#111" />
          </svg>
        </button>
        <DossierPanel />
        <div className="w-[7px] shrink-0" />
        <Shortcuts />
      </div>
      <BottomBar />
      <PaymentsDialog />
      <Callouts />
    </div>
  );
}
